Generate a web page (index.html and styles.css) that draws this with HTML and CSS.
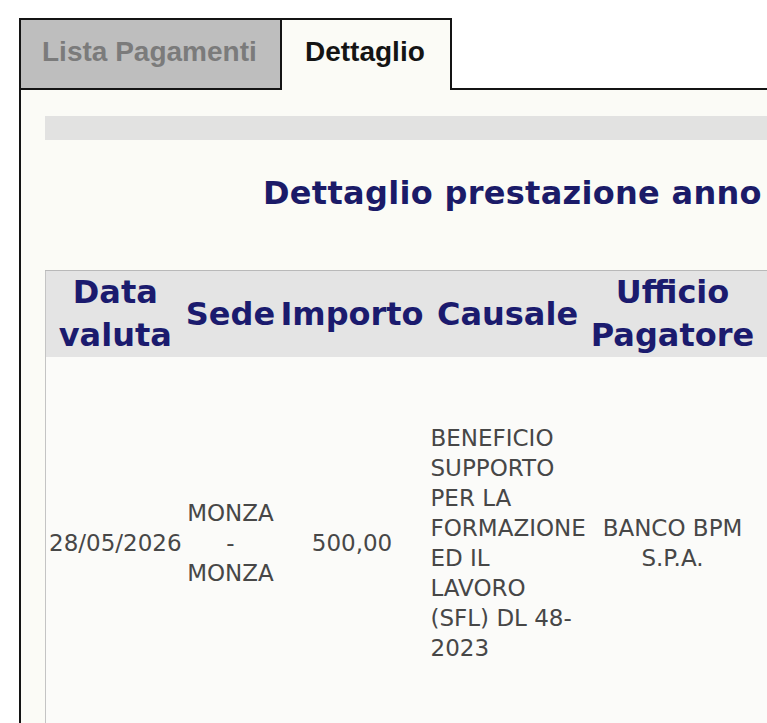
FILE: index.html
```html
<!DOCTYPE html>
<html lang="it">
<head>
<meta charset="utf-8">
<title>Dettaglio</title>
<link rel="stylesheet" href="styles.css">
</head>
<body>
<div class="frame">
  <div class="tabs">
    <div class="tab tab-inactive">Lista Pagamenti</div>
    <div class="tab tab-active">Dettaglio</div>
    <div class="tab-fill"></div>
  </div>
  <div class="panel">
    <div class="bar"></div>
    <h2 class="title">Dettaglio prestazione anno</h2>
    <table class="grid">
      <colgroup>
        <col class="c1"><col class="c2"><col class="c3"><col class="c4"><col class="c5"><col class="c6">
      </colgroup>
      <thead>
        <tr>
          <th>Data valuta</th>
          <th>Sede</th>
          <th>Importo</th>
          <th>Causale</th>
          <th>Ufficio Pagatore</th>
          <th></th>
        </tr>
      </thead>
      <tbody>
        <tr>
          <td class="date">28/05/2026</td>
          <td class="center">MONZA - MONZA</td>
          <td class="center">500,00</td>
          <td class="left">BENEFICIO SUPPORTO PER LA FORMAZIONE ED IL LAVORO (SFL) DL 48-2023</td>
          <td class="center">BANCO BPM S.P.A.</td>
          <td class="center"></td>
        </tr>
      </tbody>
    </table>
  </div>
</div>
</body>
</html>
```
FILE: styles.css
```css
html, body {
  margin: 0;
  padding: 0;
  background: #ffffff;
  overflow: hidden;
  width: 767px;
  height: 723px;
}

.frame {
  margin: 18px 0 0 19px;
  width: 900px;
}

.tabs {
  display: flex;
  height: 72px;
}

.tab {
  box-sizing: border-box;
  height: 72px;
  padding-top: 16px;
  font-family: "Liberation Sans", Arial, sans-serif;
  font-weight: bold;
  font-size: 28px;
  line-height: 32px;
  white-space: nowrap;
  border-top: 2px solid #141414;
  border-right: 2px solid #141414;
}

.tab-inactive {
  width: 263px;
  padding-left: 21px;
  background: #bebebe;
  color: #7b7b7b;
  border-left: 2px solid #141414;
  border-bottom: 2px solid #141414;
}

.tab-active {
  width: 170px;
  padding-left: 23px;
  background: #fbfbf6;
  color: #141414;
}

.tab-fill {
  flex: 1;
  height: 72px;
  box-sizing: border-box;
  border-bottom: 2px solid #141414;
}

.panel {
  border-left: 2px solid #141414;
  background: #fbfbf6;
  padding: 26px 0 0 24px;
  height: 700px;
}

.bar {
  height: 24px;
  background: #e2e2e1;
}

.title {
  margin: 33px 0 0 0;
  padding-left: 218px;
  font-family: "DejaVu Sans", Verdana, sans-serif;
  font-weight: bold;
  font-size: 32px;
  line-height: 40px;
  letter-spacing: 0.3px;
  color: #1b1b68;
  white-space: nowrap;
}

.grid {
  margin-top: 57px;
  border-collapse: collapse;
  table-layout: fixed;
  width: 900px;
  border-top: 1px solid #b9b9b9;
  border-left: 1px solid #c4c4c4;
}

.c1 { width: 139px; }
.c2 { width: 92px; }
.c3 { width: 151px; }
.c4 { width: 160px; }
.c5 { width: 170px; }
.c6 { width: 188px; }

.grid th {
  background: #e4e4e4;
  padding: 0;
  font-family: "DejaVu Sans", Verdana, sans-serif;
  font-weight: bold;
  font-size: 32px;
  line-height: 43px;
  color: #1b1b6e;
  text-align: center;
  vertical-align: middle;
}

.grid td {
  padding: 66px 2px;
  font-family: "DejaVu Sans", Verdana, sans-serif;
  font-size: 23px;
  line-height: 30px;
  color: #474747;
  vertical-align: middle;
  background: #fbfbf9;
}

.grid td.date {
  padding-left: 3px;
  white-space: nowrap;
}

.grid td.center {
  text-align: center;
}

.grid td.left {
  padding-left: 3px;
  text-align: left;
}
```
